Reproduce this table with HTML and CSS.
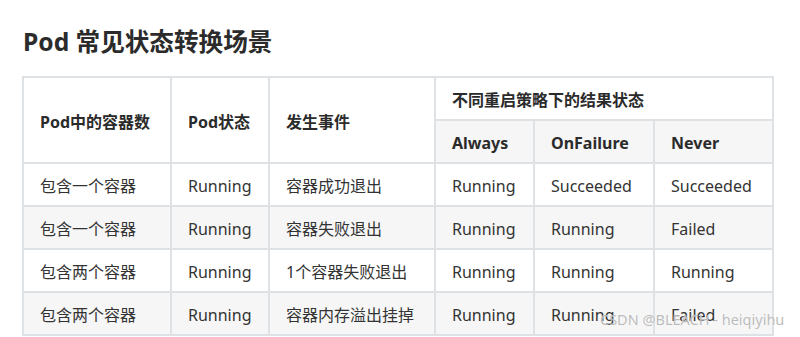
FILE: index.html
```html
<!DOCTYPE html>
<html lang="zh-CN">
<head>
<meta charset="utf-8">
<title>Pod 常见状态转换场景</title>
<link rel="stylesheet" href="styles.css">
</head>
<body>
<main class="article">
  <h2 class="title">Pod 常见状态转换场景</h2>
  <table class="grid">
    <colgroup>
      <col class="c1"><col class="c2"><col class="c3"><col class="c4"><col class="c5"><col class="c6">
    </colgroup>
    <thead>
      <tr>
        <th rowspan="2">Pod中的容器数</th>
        <th rowspan="2">Pod状态</th>
        <th rowspan="2">发生事件</th>
        <th colspan="3">不同重启策略下的结果状态</th>
      </tr>
      <tr class="sub">
        <th>Always</th>
        <th>OnFailure</th>
        <th>Never</th>
      </tr>
    </thead>
    <tbody>
      <tr><td>包含一个容器</td><td>Running</td><td>容器成功退出</td><td>Running</td><td>Succeeded</td><td>Succeeded</td></tr>
      <tr class="alt"><td>包含一个容器</td><td>Running</td><td>容器失败退出</td><td>Running</td><td>Running</td><td>Failed</td></tr>
      <tr><td>包含两个容器</td><td>Running</td><td>1个容器失败退出</td><td>Running</td><td>Running</td><td>Running</td></tr>
      <tr class="alt"><td>包含两个容器</td><td>Running</td><td>容器内存溢出挂掉</td><td>Running</td><td>Running</td><td>Failed</td></tr>
    </tbody>
  </table>
  <div class="watermark">CSDN @BLEACH - heiqiyihu</div>
</main>
</body>
</html>
```

FILE: styles.css
```css
html, body {
  margin: 0;
  padding: 0;
  background: #ffffff;
}

.article {
  position: relative;
  padding: 0 0 0 22px;
  font-family: "Noto Sans", "Noto Sans CJK SC", sans-serif;
  color: #333333;
}

.title {
  margin: 0 0 18px 0;
  padding: 26px 0 0 1px;
  font-size: 24.6px;
  line-height: 32px;
  font-weight: 700;
  color: #2b2b2b;
}

.grid {
  border-collapse: collapse;
  table-layout: fixed;
  width: 750px;
  font-size: 16px;
  line-height: 25px;
}

.c1 { width: 148px; }
.c2 { width: 98px; }
.c3 { width: 166px; }
.c4 { width: 99px; }
.c5 { width: 120px; }
.c6 { width: 119px; }

.grid th,
.grid td {
  border: 2px solid #dfe2e5;
  padding: 10px 16px 6px;
  text-align: left;
  vertical-align: middle;
  white-space: nowrap;
}

.grid th {
  font-weight: 700;
  color: #2b2b2b;
}

.grid .sub th {
  background: #f6f6f6;
}

.grid tr.alt td {
  background: #f6f6f6;
}

.watermark {
  position: absolute;
  left: 600px;
  top: 309px;
  font-family: "Noto Sans", sans-serif;
  font-size: 14.5px;
  line-height: 20px;
  color: rgba(165, 165, 165, 0.75);
  text-shadow: 0 0 1px #fff;
  white-space: nowrap;
}
```
